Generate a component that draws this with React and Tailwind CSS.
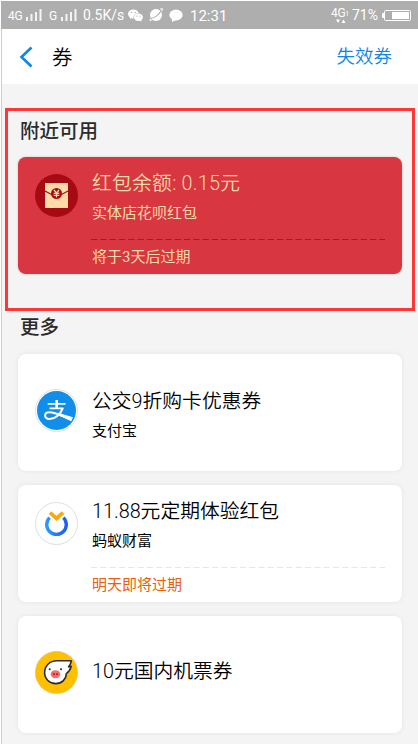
import { AiFillWechat } from "react-icons/ai";

const SignalBars = () => (
  <svg width="18" height="13" viewBox="0 0 18 13" fill="#f4f4f4">
    <rect x="1" y="8" width="2" height="4" />
    <rect x="5.5" y="5" width="2" height="7" />
    <rect x="10" y="3" width="2" height="9" />
    <rect x="14.5" y="0" width="2" height="12" />
  </svg>
);

const StatusBar = () => (
  <div className="flex h-7 items-center bg-[#aeaeae] pl-[7px] pr-[6px] text-white">
    <span className="w-[17px] pt-px text-[12px] tracking-tight">4G</span>
    <SignalBars />
    <span className="ml-[6px] w-[11px] pt-px text-[12px]">G</span>
    <SignalBars />
    <span className="ml-[5px] w-[43px] whitespace-nowrap pt-px text-[14px]">0.5K/s</span>
    <AiFillWechat size={17} className="ml-px" />
    <svg className="ml-[5px]" width="14" height="14" viewBox="0 0 14 14">
      <circle cx="7" cy="7" r="6" fill="#fff" />
      <path d="M1 10.5 C5 10.5 10 7 12.5 2" stroke="#aeaeae" strokeWidth="1.1" fill="none" />
      <path d="M11 1.2 L13.5 0.6 L12.8 3.5 M1.5 10.5 L0.8 12.5 L3 12" stroke="#fff" strokeWidth="0.9" fill="none" />
    </svg>
    <svg className="ml-[6px]" width="14" height="13" viewBox="0 0 14 13" fill="#fff">
      <ellipse cx="7" cy="6" rx="6.6" ry="5.4" />
      <path d="M3 9 L3 13 L8 10.5 Z" />
    </svg>
    <span className="ml-[7px] pt-[2px] text-[15px]">12:31</span>
    <div className="ml-auto flex w-[21px] flex-col items-start pt-px">
      <div className="flex items-end leading-none">
        <span className="text-[12px] leading-[11px] tracking-tight">4G</span>
        <span className="text-[7px] leading-[9px]">1</span>
      </div>
      <svg className="ml-[5px]" width="10" height="5" viewBox="0 0 10 5" fill="#fff">
        <path d="M0 0.5 H4 L2 4 Z M5.5 4 H9.5 L7.5 0.5 Z" />
      </svg>
    </div>
    <span className="w-[30px] whitespace-nowrap pt-px text-[14px]">71%</span>
    <svg width="30" height="13" viewBox="0 0 30 13" fill="none">
      <rect x="2.5" y="1.5" width="26" height="10" rx="1" stroke="#fff" />
      <rect x="0" y="4" width="2.5" height="5" rx="1" fill="#fff" />
      <rect x="10" y="3" width="17" height="7" fill="#fff" />
    </svg>
  </div>
);

const Header = () => (
  <div className="flex h-[55px] items-center bg-white pl-[17px] pr-[26px]">
    <svg width="14" height="22" viewBox="0 0 14 22" fill="none" stroke="#0f85e4" strokeWidth="2.6">
      <path d="M12.5 1.5 L2.5 11 L12.5 20.5" />
    </svg>
    <h1 className="ml-[19px] pt-[3px] text-[20.5px] text-black">券</h1>
    <button className="ml-auto pt-[3px] text-[18.5px] text-[#0f85e4]">失效券</button>
  </div>
);

const RedPacketIcon = () => (
  <svg width="43" height="43" viewBox="0 0 43 43">
    <circle cx="21.5" cy="21.5" r="21.5" fill="#a60b14" />
    <rect x="10" y="9" width="23" height="25" fill="#fedba8" />
    <path d="M10 17 L16 20.2 H27 L33 17" stroke="#a60b14" strokeWidth="1.3" fill="none" />
    <circle cx="21.5" cy="19.5" r="5.5" fill="#a60b14" />
    <path d="M19 16 L21.5 19 L24 16 M21.5 19 V23.4 M18.7 19.3 H24.3 M18.7 21.3 H24.3" stroke="#fedba8" strokeWidth="1.2" fill="none" />
  </svg>
);

const AlipayIcon = () => (
  <svg width="43" height="43" viewBox="0 0 43 43" fill="none">
    <circle cx="21.5" cy="21.5" r="21" fill="#fff" stroke="#dedede" />
    <circle cx="21.5" cy="21.5" r="19.5" fill="#108ee9" />
    <path d="M12.7 14.8 H30.5 M14.5 19.3 H28.5" stroke="#fff" strokeWidth="1.8" />
    <path d="M21.7 11 V19.5" stroke="#fff" strokeWidth="2.6" />
    <path d="M27.6 19.3 C25.5 25.5 20 30 14.5 30 C8.6 30 8.6 23.2 14.5 23.2 C19 23.2 23 25 27 26.8" stroke="#fff" strokeWidth="2.1" />
    <path d="M23 23.8 L38 28.3 L36.2 32.3 L22.5 26 Z" fill="#fff" />
  </svg>
);

const FortuneIcon = () => (
  <svg width="43" height="43" viewBox="0 0 43 43" fill="none">
    <defs>
      <linearGradient id="ring" x1="0" y1="0" x2="1" y2="0">
        <stop offset="0" stopColor="#2b98fb" />
        <stop offset="1" stopColor="#1f5ef0" />
      </linearGradient>
    </defs>
    <circle cx="21.5" cy="21.5" r="21" fill="#fff" stroke="#dedede" />
    <path d="M14.6 15.6 A9.8 9.8 0 1 0 28.4 15.6" stroke="url(#ring)" strokeWidth="3.4" />
    <path d="M15 10.7 L21.5 16.5 L28 10.7" stroke="#fba813" strokeWidth="3.8" />
  </svg>
);

const FliggyIcon = () => (
  <svg width="43" height="43" viewBox="0 0 43 43" fill="none">
    <circle cx="21.5" cy="21.5" r="21.2" fill="#ffc000" stroke="#dfc77c" strokeWidth="0.6" />
    <path
      d="M36.3 9.8 H22 C14.5 9.8 9.6 15 9.6 21.5 C9.6 28 14.5 32.6 20.8 32.6 C27 32.6 31.2 28 31.4 22.6 C33.8 20.8 35.6 18.4 36.2 15.2 L33.6 15.8 C35 14 36 12 36.3 9.8 Z"
      fill="#fff"
      stroke="#2c2c2c"
      strokeWidth="1.6"
      strokeLinejoin="round"
    />
    <ellipse cx="20.5" cy="23.2" rx="4.8" ry="4" fill="#fb6a69" />
    <circle cx="14.7" cy="18.2" r="1" fill="#222" />
    <circle cx="26" cy="18.2" r="1" fill="#222" />
    <circle cx="19" cy="23.2" r="0.9" fill="#7b2020" />
    <circle cx="22" cy="23.2" r="0.9" fill="#7b2020" />
  </svg>
);

const coupons = [
  { title: "公交9折购卡优惠券", source: "支付宝", Icon: AlipayIcon },
  { title: "11.88元定期体验红包", source: "蚂蚁财富", notice: "明天即将过期", Icon: FortuneIcon },
  { title: "10元国内机票券", Icon: FliggyIcon },
];

const CouponCard = ({ title, source, notice, Icon, red }) => (
  <div
    className={`flex h-[117px] flex-col rounded-lg px-[17px] ${
      red
        ? "bg-[#d83640] text-[#fedba8] shadow-[0_0_2px_rgba(120,0,0,0.3)]"
        : "bg-white text-black shadow-[0_0_5px_rgba(0,0,0,0.07)]"
    }`}
  >
    <div className={`flex ${notice ? "h-[77px] pt-[17px]" : "pt-[35px]"}`}>
      <Icon />
      <div className={`ml-[14px] ${!source ? "mt-[6px]" : notice ? "-mt-[5px]" : "-mt-[2px]"}`}>
        <p className={`text-[19.8px] leading-[30px] ${red ? "tracking-[0.25px]" : ""}`}>{title}</p>
        {source && <p className="text-[15px] font-normal leading-[29px]">{source}</p>}
      </div>
    </div>
    {notice && (
      <div className="ml-[56px]">
        <svg className="block" width="294" height="10" viewBox="0 0 294 10">
          <path d="M0 5.5 H294" stroke={red ? "#b3141f" : "#e6e6e6"} strokeDasharray="6.3 3" />
        </svg>
        <p className={`ml-px text-[15px] font-normal leading-[27px] ${red ? "" : "text-[#e8600a]"}`}>{notice}</p>
      </div>
    )}
  </div>
);

const App = () => (
  <div className="h-[744px] w-[418px] overflow-hidden border-l border-t border-white bg-[#f4f4f4] font-[Roboto,'Noto_Sans_CJK_SC',sans-serif]">
    <StatusBar />
    <div className="h-full border-l border-[#cfcfcf] font-[350]">
      <Header />
      <section className="mx-[3px] mt-6 h-[203px] border-[3px] border-[#fd3638] px-[10px] pt-[6px]">
        <h2 className="ml-[2px] text-[19.5px] font-medium leading-[30px] text-[#2b2b2b]">附近可用</h2>
        <div className="mt-[10px]">
          <CouponCard title="红包余额: 0.15元" source="实体店花呗红包" notice="将于3天后过期" Icon={RedPacketIcon} red />
        </div>
      </section>
      <section className="mx-4 mt-[3px]">
        <h2 className="ml-[2px] text-[19.5px] font-medium leading-[28px] text-[#2b2b2b]">更多</h2>
        <div className="mt-[12px] flex flex-col gap-[14px]">
          {coupons.map((c) => (
            <CouponCard key={c.title} {...c} />
          ))}
        </div>
      </section>
    </div>
  </div>
);

export default App;
